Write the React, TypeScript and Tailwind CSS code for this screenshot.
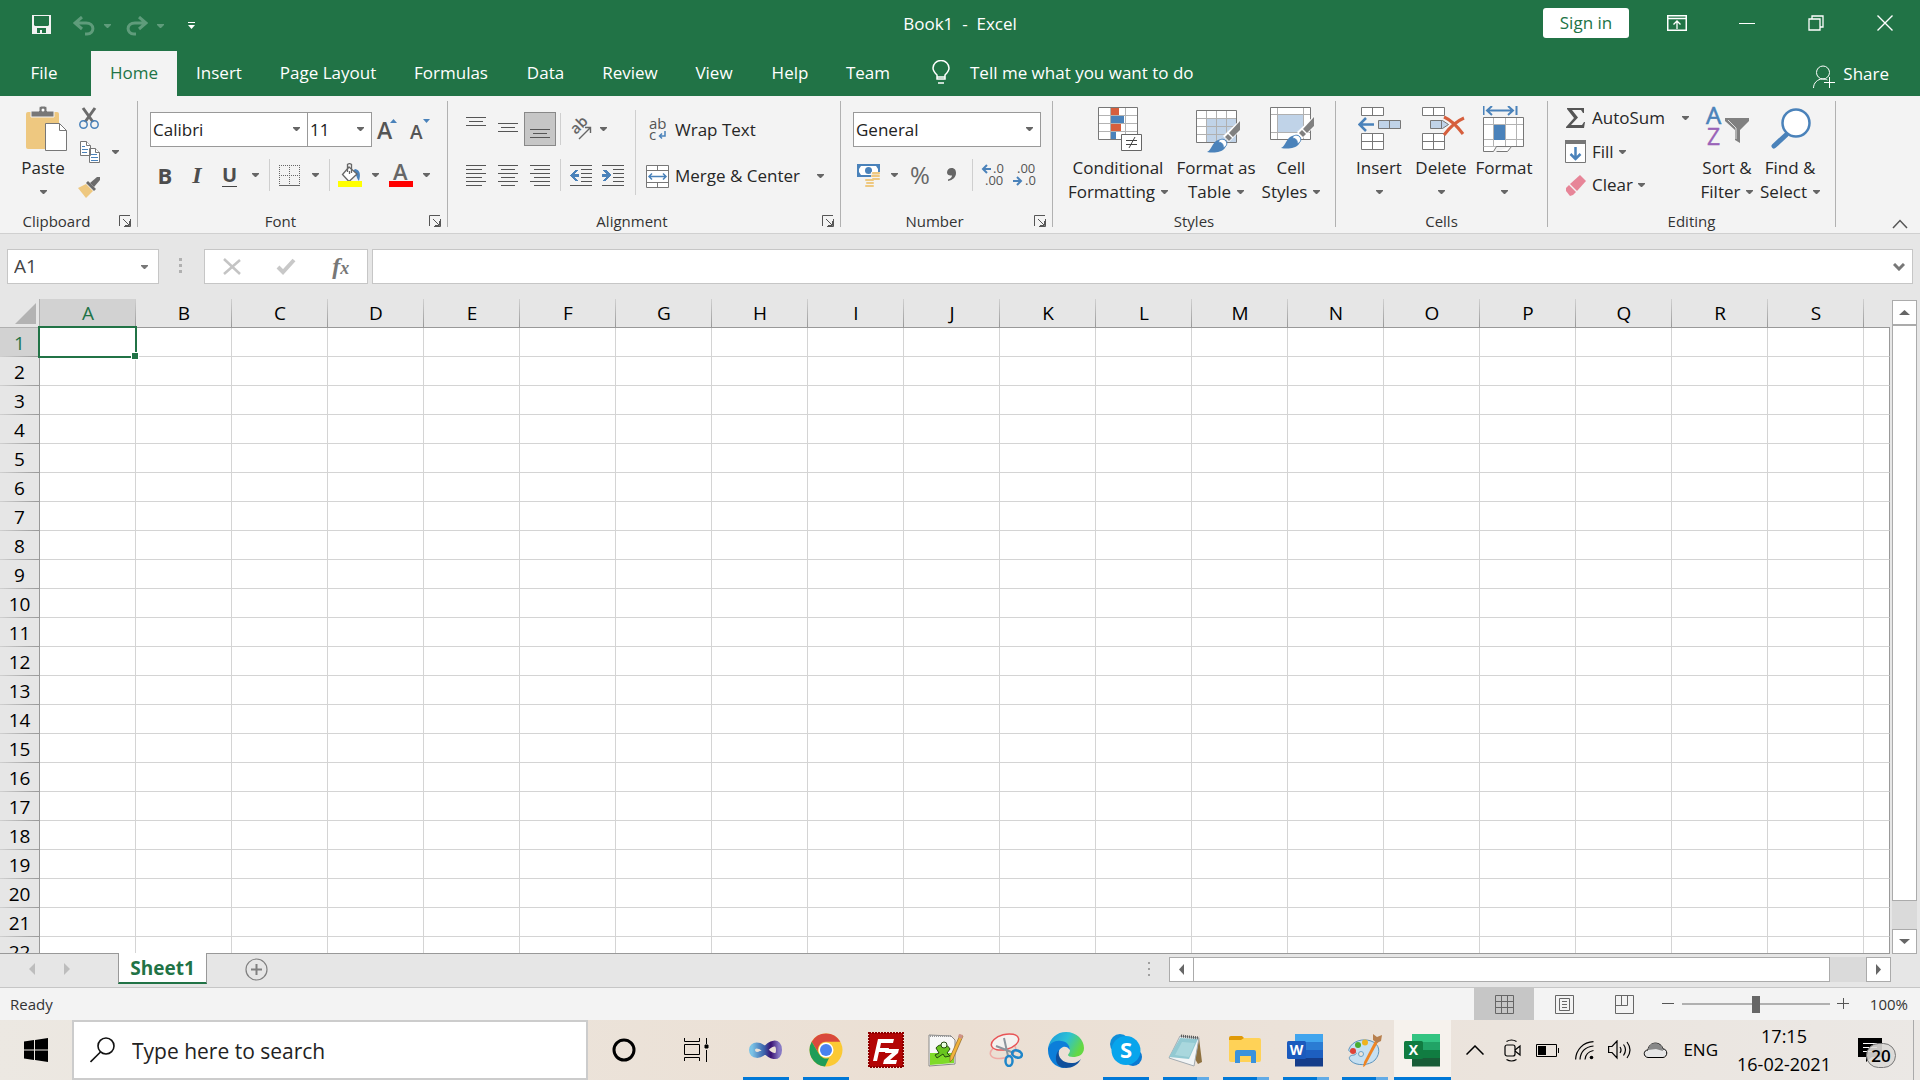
import { useState } from 'react';
import type { ReactNode } from 'react';
import clsx from 'clsx';

const COLUMNS = 'ABCDEFGHIJKLMNOPQRS'.split('');
const ROWS = Array.from({ length: 22 }, (_, i) => i + 1);

const TABS = [
  { name: 'Home', width: 'w-[86px]' },
  { name: 'Insert', width: 'w-[84px]' },
  { name: 'Page Layout', width: 'w-[134px]' },
  { name: 'Formulas', width: 'w-[112px]' },
  { name: 'Data', width: 'w-[77px]' },
  { name: 'Review', width: 'w-[92px]' },
  { name: 'View', width: 'w-[76px]' },
  { name: 'Help', width: 'w-[76px]' },
  { name: 'Team', width: 'w-[80px]' },
];

function Caret({ className = 'text-[#666]' }: { className?: string }) {
  return (
    <svg className={clsx('shrink-0', className)} width="7" height="4" viewBox="0 0 7 4" fill="currentColor">
      <path d="M0 0h7v1L4 4H3L0 1z" />
    </svg>
  );
}

function Separator() {
  return <div className="mx-1 h-8 w-px shrink-0 bg-[#cfcfcf]" />;
}

function Tool({ label, className, children }: { label: string; className: string; children: ReactNode }) {
  return (
    <button aria-label={label} className={clsx('flex h-8 shrink-0 items-center justify-center', className)}>
      {children}
    </button>
  );
}

function Group({ label, width, launcher = false, children }: { label: string; width: string; launcher?: boolean; children: ReactNode }) {
  return (
    <section className={clsx('flex shrink-0', width)} aria-label={label}>
      <div className="flex min-w-0 flex-1 flex-col">
        <div className="h-[113px]">{children}</div>
        <div className="flex h-6 items-center">
          <span className="flex-1 text-center text-[15px] leading-6 text-[#333]">{label}</span>
          {launcher && (
            <button aria-label={`${label} settings`} className="flex w-6 justify-center">
              <svg width="12" height="12" fill="none" stroke="#555">
                <path d="M.5 11V.5H11M11.5 4v7.5H5M4 4l6 6M10.500 6v4.500H6" />
              </svg>
            </button>
          )}
        </div>
      </div>
      <div className="mt-[5px] h-[126px] w-px bg-[#b1b1b1]" />
    </section>
  );
}

function BigButton({ icon, lines, caretBelow = false, width }: { icon: ReactNode; lines: string[]; caretBelow?: boolean; width: string }) {
  return (
    <button className={clsx('flex shrink-0 flex-col items-center text-[17px] leading-6 whitespace-nowrap text-[#262626]', width)}>
      <span className="flex h-[52px] items-start justify-center">{icon}</span>
      <span>{lines[0]}</span>
      {caretBelow ? (
        <span className="flex h-6 items-center">
          <Caret />
        </span>
      ) : (
        <span className="flex items-center gap-[6px]">
          {lines[1]}
          <Caret />
        </span>
      )}
    </button>
  );
}

function Combo({ label, value, options, width }: { label: string; value: string; options: string[]; width: string }) {
  return (
    <div className={clsx('relative h-[35px] shrink-0', width)}>
      <select
        aria-label={label}
        defaultValue={value}
        className="h-full w-full appearance-none border border-[#999] bg-white pl-[2px] text-[17px] text-[#222] outline-none"
      >
        {options.map((o) => (
          <option key={o}>{o}</option>
        ))}
      </select>
      <span className="pointer-events-none absolute top-[15px] right-2 flex">
        <Caret />
      </span>
    </div>
  );
}

/* rows of [y, x1, x2] drawn as one pixel rules */
function Lines({ rows, width, height, children }: { rows: number[][]; width: number; height: number; children?: ReactNode }) {
  return (
    <svg width={width} height={height} shapeRendering="crispEdges">
      {rows.map(([y, a, b]) => (
        <rect key={y} x={a} y={y} width={b - a} height="1" fill="#555" />
      ))}
      {children}
    </svg>
  );
}

function Brush() {
  return (
    <g>
      <path d="M44 11v11L33 33l-6-6z" fill="#fff" />
      <path d="M44 12v9l-7 7-4-4z" fill="#808080" />
      <path d="M32 25l4 4-3 3-4-4z" fill="#808080" />
      <path d="M11 43c5-2 5-10 11-12 6-1 10 4 7 8-4 5-12 5-18 4z" fill="#4a82ba" />
      <path d="M22 33c1-3 6-4 8-1s0 6-3 7c1-3-1-6-5-6z" fill="#fff" stroke="#4a82ba" />
    </g>
  );
}

function ClipboardGroup() {
  return (
    <Group label="Clipboard" width="w-[138px]" launcher>
      <div className="flex pt-2">
        <div className="pl-[12px]">
          <BigButton
            width="w-[62px]"
            lines={['Paste']}
            caretBelow
            icon={
              <svg className="mt-[2px] ml-2" width="42" height="46">
                <rect x="0" y="6" width="33" height="37" rx="2" fill="#eec880" />
                <path d="M5 11V5h8V1l2-1h4l2 1v4h7v6z" fill="#777" stroke="#f3f3f3" />
                <circle cx="17" cy="4" r="1.500" fill="#fff" />
                <path d="M19.500 17.500h14l7 7v20h-21z" fill="#fff" stroke="#777" />
                <path d="M33.500 17.500v7h7" fill="none" stroke="#777" />
              </svg>
            }
          />
        </div>
        <div className="flex flex-col pl-[2px]">
          <button aria-label="Cut" className="flex h-[27px] w-[26px] items-center justify-center">
            <svg width="20" height="22" fill="none">
              <path d="M4 1l10 14M16 1L6 15" stroke="#6b6b6b" strokeWidth="3" />
              <circle cx="4.500" cy="17.500" r="3.700" stroke="#4a82ba" strokeWidth="1.500" />
              <circle cx="15.500" cy="17.500" r="3.700" stroke="#4a82ba" strokeWidth="1.500" />
            </svg>
          </button>
          <div className="flex h-[42px] items-center">
            <button aria-label="Copy" className="flex w-[28px] items-center justify-center">
              <svg width="21" height="23" fill="#fff" stroke="#777">
                <path d="M.5.5h6l4 4v10H.5zM9.500 7.500h6l4 4v10h-10z" />
                <path d="M6.500.5v4h4M15.500 7.500v4h4" />
                <path d="M2 5.500h3M2 8.500h6M2 11.500h5M11 13.500h6M11 16.500h7M11 19.500h7" stroke="#4a82ba" />
              </svg>
            </button>
            <button aria-label="Copy options" className="ml-px flex w-[20px] justify-center">
              <Caret />
            </button>
          </div>
          <button aria-label="Format Painter" className="flex h-[28px] w-[26px] items-center justify-center">
            <svg width="24" height="21">
              <path d="M1 11l8-4 7 7-7 7z" fill="#eec880" />
              <path d="M9 6l2-2 8 8-2 2z" fill="#6b6b6b" />
              <path d="M13 6l7-6h3v3l-6 7z" fill="#6b6b6b" />
            </svg>
          </button>
        </div>
      </div>
    </Group>
  );
}

function FontGroup() {
  return (
    <Group label="Font" width="w-[310px]" launcher>
      <div className="flex flex-col gap-3 pt-4 pl-3">
        <div className="flex items-center">
          <Combo label="Font name" value="Calibri" options={['Calibri', 'Arial', 'Cambria']} width="w-[158px]" />
          <Combo label="Font size" value="11" options={['10', '11', '12', '14']} width="-ml-px w-[65px]" />
          <Tool label="Increase font size" className="w-8">
            <svg className="overflow-visible" width="22" height="24">
              <text x="0" y="21" fontSize="23" fontWeight="600" fill="#555">A</text>
              <path d="M13 5l3.500-4L20 5z" fill="#4a82ba" />
            </svg>
          </Tool>
          <Tool label="Decrease font size" className="w-8">
            <svg className="overflow-visible" width="22" height="24">
              <text x="1" y="21" fontSize="19" fontWeight="600" fill="#555">A</text>
              <path d="M14 1h7l-3.500 4z" fill="#4a82ba" />
            </svg>
          </Tool>
        </div>
        <div className="flex items-center text-[22px] leading-8 text-[#4d4d4d]">
          <Tool label="Bold" className="w-[30px] font-bold">B</Tool>
          <Tool label="Italic" className="w-[34px] font-['Liberation_Serif',serif] text-2xl font-bold italic">I</Tool>
          <Tool label="Underline" className="w-[31px]">
            <span className="border-b border-[#444] text-xl leading-[22px] font-bold">U</span>
          </Tool>
          <Tool label="Underline options" className="w-5"><Caret /></Tool>
          <Separator />
          <Tool label="Borders" className="w-[31px]">
            <svg width="21" height="21" fill="none" stroke="#666" shapeRendering="crispEdges">
              <path d="M0 .5h21M0 10.500h21M.5 0v20M10.500 0v20M20.500 0v20" strokeDasharray="1 1" />
              <path d="M0 20.500h21" />
            </svg>
          </Tool>
          <Tool label="Border options" className="w-5"><Caret /></Tool>
          <Separator />
          <Tool label="Fill color" className="w-[31px]">
            <svg width="24" height="24" fill="none">
              <path d="M17 6c5 1 6 5 4 12-3-3-2-7-6-10z" fill="#4a82ba" />
              <path d="M11 4l8 7-8 7.500-6.500-7z" fill="#fff" stroke="#666" strokeWidth="1.300" />
              <path d="M9.500 9V1.500l2-1 2 1V10M11.500 8v3" stroke="#666" strokeWidth="1.300" />
              <path d="M0 18h24v6H0z" fill="#ff0" />
            </svg>
          </Tool>
          <Tool label="Fill color options" className="w-5"><Caret /></Tool>
          <Tool label="Font color" className="w-[31px]">
            <svg className="overflow-visible" width="24" height="24">
              <text x="4" y="17" fontSize="22" fontWeight="600" fill="#666">A</text>
              <path d="M0 18h24v6H0z" fill="red" />
            </svg>
          </Tool>
          <Tool label="Font color options" className="w-5"><Caret /></Tool>
        </div>
      </div>
    </Group>
  );
}

const LEFT = [[0, 0, 20], [4, 0, 16], [8, 0, 20], [12, 0, 16], [16, 0, 20], [20, 0, 16]];
const CENTER = [[0, 0, 20], [4, 3, 17], [8, 0, 20], [12, 3, 17], [16, 0, 20], [20, 3, 17]];
const RIGHT = [[0, 0, 20], [4, 4, 20], [8, 0, 20], [12, 4, 20], [16, 0, 20], [20, 4, 20]];
const INDENT = [[0, 0, 22], [4, 11, 22], [8, 11, 22], [12, 11, 22], [16, 11, 22], [20, 0, 22]];

function AlignmentGroup() {
  return (
    <Group label="Alignment" width="w-[393px]" launcher>
      <div className="flex pt-[14px] pl-3">
        <div className="flex w-[175px] shrink-0 flex-col gap-[11px]">
          <div className="flex h-[38px] items-center">
            <Tool label="Top align" className="w-8">
              <Lines width={20} height={24} rows={[[0, 0, 20], [4, 3, 17], [8, 0, 20]]} />
            </Tool>
            <Tool label="Middle align" className="w-8">
              <Lines width={20} height={24} rows={[[6, 0, 20], [10, 3, 17], [14, 0, 20]]} />
            </Tool>
            <button aria-label="Bottom align" className="flex h-[34px] w-8 items-center justify-center border border-[#888] bg-[#c6c6c6]">
              <Lines width={20} height={24} rows={[[12, 0, 20], [16, 3, 17], [20, 0, 20]]} />
            </button>
            <Separator />
            <Tool label="Orientation" className="w-8">
              <svg className="overflow-visible" width="22" height="22">
                <text x="6" y="17" fontSize="15" fontWeight="600" fill="#666" transform="rotate(-45 6 17)">ab</text>
                <path d="M9 21L20 10M15 9.500h5.500V15" fill="none" stroke="#666" strokeWidth="1.400" />
              </svg>
            </Tool>
            <Tool label="Orientation options" className="w-3"><Caret /></Tool>
          </div>
          <div className="flex items-center">
            <Tool label="Align left" className="w-8"><Lines width={20} height={21} rows={LEFT} /></Tool>
            <Tool label="Center" className="w-8"><Lines width={20} height={21} rows={CENTER} /></Tool>
            <Tool label="Align right" className="w-8"><Lines width={20} height={21} rows={RIGHT} /></Tool>
            <Separator />
            <Tool label="Decrease indent" className="w-8">
              <Lines width={22} height={21} rows={INDENT}>
                <path d="M0 10l5-5h3L5 9h4v3H5l3 4H5z" fill="#4a82ba" />
              </Lines>
            </Tool>
            <Tool label="Increase indent" className="w-8">
              <Lines width={22} height={21} rows={INDENT}>
                <path d="M9 10L4 5H1l3 4H0v3h4l-3 4h3z" fill="#4a82ba" />
              </Lines>
            </Tool>
          </div>
        </div>
        <div className="h-[85px] w-px shrink-0 bg-[#cfcfcf]" />
        <div className="flex flex-1 flex-col gap-[14px] pt-1 pl-[10px] text-[17px] whitespace-nowrap text-[#262626]">
          <button className="flex h-8 items-center">
            <span className="flex w-[29px] pl-[3px]">
              <svg className="overflow-visible" width="20" height="24" fill="#555" fontSize="15">
                <text x="0" y="11">ab</text>
                <text x="0" y="22">c</text>
                <path d="M16 13v5h-5M13 15.500L10.500 18l2.500 2.500" fill="none" stroke="#4a82ba" strokeWidth="1.500" />
              </svg>
            </span>
            Wrap Text
          </button>
          <div className="flex h-8 items-center">
            <button className="flex items-center">
              <span className="flex w-[29px]">
                <svg width="23" height="23" fill="#fff" stroke="#777">
                  <path d="M.5.5h22v22H.5zM.5 5.500h22M.5 17.500h22M11.500.5v5M11.500 17.500v5" />
                  <path d="M3 11.500h17M6 8.500l-3 3 3 3M17 8.500l3 3-3 3" fill="none" stroke="#4a82ba" strokeWidth="1.500" />
                </svg>
              </span>
              Merge & Center
            </button>
            <button aria-label="Merge options" className="flex flex-1 items-center justify-center">
              <Caret />
            </button>
          </div>
        </div>
      </div>
    </Group>
  );
}

function NumberGroup() {
  return (
    <Group label="Number" width="w-[212px]" launcher>
      <div className="flex flex-col gap-3 pt-4 pl-3">
        <Combo label="Number format" value="General" options={['General', 'Number', 'Currency', 'Percentage']} width="w-[188px]" />
        <div className="flex items-center text-[#666]">
          <Tool label="Accounting format" className="w-[31px]">
            <svg width="24" height="23">
              <path d="M0 0h23v13H0z" fill="#4a82ba" />
              <path d="M4 2h15l2 3v3l-2 3H4L2 8V5z" fill="#fff" />
              <circle cx="11.500" cy="6.500" r="3.500" fill="#4a82ba" />
              <path d="M14 8h9v10h-9zM8 15h10v8H8z" fill="#f3f3f3" />
              <g fill="#eec880">
                <rect x="15" y="8" width="8" height="2.500" rx="1" />
                <rect x="14" y="11" width="9" height="2" rx="1" />
                <rect x="15" y="14" width="8" height="2" rx="1" />
                <rect x="8" y="15" width="9" height="2" rx="1" />
                <rect x="9" y="18" width="8" height="2" rx="1" />
                <rect x="8" y="21" width="9" height="2" rx="1" />
              </g>
            </svg>
          </Tool>
          <Tool label="Accounting options" className="w-5"><Caret /></Tool>
          <Tool label="Percent style" className="w-8 text-2xl">%</Tool>
          <Tool label="Comma style" className="w-8">
            <svg width="10" height="14" fill="#666">
              <path d="M4.500 0C8 0 9 2.500 9 5c0 4-3 7-8 8v-1.500c3-1 4-2.500 4-4C2 8 0 6.500 0 4.500 0 2 2 0 4.500 0z" />
            </svg>
          </Tool>
          <Separator />
          <Tool label="Increase decimal" className="w-8">
            <svg className="overflow-visible" width="24" height="24" fill="#555" fontSize="13">
              <text x="12" y="10">.0</text>
              <text x="4" y="22">.00</text>
              <path d="M10 6H2M6 2L2 6l4 4" fill="none" stroke="#4a82ba" strokeWidth="2" />
            </svg>
          </Tool>
          <Tool label="Decrease decimal" className="w-8">
            <svg className="overflow-visible" width="24" height="24" fill="#555" fontSize="13">
              <text x="4" y="10">.00</text>
              <text x="12" y="22">.0</text>
              <path d="M0 18h8M4 14l4 4-4 4" fill="none" stroke="#4a82ba" strokeWidth="2" />
            </svg>
          </Tool>
        </div>
      </div>
    </Group>
  );
}

function StylesGroup() {
  return (
    <Group label="Styles" width="w-[283px]">
      <div className="flex pt-2 pl-[11px]">
        <BigButton
          width="w-[108px]"
          lines={['Conditional', 'Formatting']}
          icon={
            <svg className="mt-[3px] ml-1" width="44" height="44">
              <path d="M.5.5h39v32H.5z" fill="#fff" stroke="#777" />
              <path d="M12.500 1v31M27.500 1v31M1 8.500h38M1 16.500h38M1 24.500h38" stroke="#b3b3b3" fill="none" />
              <path d="M13 1h8v7h-8zM13 17h10v7H13z" fill="#d65f3d" />
              <path d="M13 9h13v7H13zM13 25h5v7h-5z" fill="#4a82ba" />
              <path d="M23.500 27.500h20v16h-20z" fill="#fff" stroke="#666" />
              <path d="M28 33.500h11M28 37.500h11M37 30l-6 11" stroke="#444" fill="none" />
            </svg>
          }
        />
        <BigButton
          width="w-[88px]"
          lines={['Format as', 'Table']}
          icon={
            <svg className="mt-[6px] ml-1" width="44" height="44">
              <path d="M.5.5h40v32H.5z" fill="#fff" />
              <path d="M11 9h29v23H11z" fill="#c0d3e8" />
              <path d="M10.500 1v31M20.500 1v31M30.500 1v31M1 8.500h39M1 16.500h39M1 24.500h39" stroke="#b0b0b0" fill="none" />
              <path d="M.5.5h40v32H.5z" fill="none" stroke="#777" />
              <g transform="translate(0 -1)"><Brush /></g>
            </svg>
          }
        />
        <BigButton
          width="w-[62px]"
          lines={['Cell', 'Styles']}
          icon={
            <svg className="mt-[3px] ml-[2px]" width="44" height="44">
              <path d="M.5.5h40v32H.5z" fill="#fff" />
              <path d="M8 8h25v17H8z" fill="#c0d3e8" />
              <path d="M7.500 1v31M33.500 1v31M1 7.500h39M1 25.500h39" stroke="#b0b0b0" fill="none" />
              <path d="M.5.5h40v32H.5z" fill="none" stroke="#777" />
              <g transform="translate(0 -2)"><Brush /></g>
            </svg>
          }
        />
      </div>
    </Group>
  );
}

function CellsGroup() {
  return (
    <Group label="Cells" width="w-[212px]">
      <div className="flex pt-2 pl-3">
        <BigButton
          width="w-[62px]"
          lines={['Insert']}
          caretBelow
          icon={
            <svg className="mt-[3px]" width="43" height="44" fill="#fff" stroke="#777">
              <path d="M3.500.5h22v8h-22zM14.500.5v8M3.500 26.500h22v16h-22zM14.500 26.500v16M3.500 34.500h22" />
              <path d="M20.500 13.500h22v8h-22zM31.500 13.500v8" fill="#c0d3e8" />
              <path d="M16 17.500H2M8 11l-6.500 6.500L8 24" fill="none" stroke="#4a82ba" strokeWidth="2.500" />
            </svg>
          }
        />
        <BigButton
          width="w-[62px]"
          lines={['Delete']}
          caretBelow
          icon={
            <svg className="mt-[3px] ml-1" width="43" height="44" fill="#fff" stroke="#777">
              <path d="M.5.5h22v8H.5zM11.500.5v8M.5 26.500h22v16H.5zM11.500 26.500v16M.5 34.500h22" />
              <path d="M8.500 13.500h12l6 4-6 4h-12zM19.500 13.500v8" fill="#c0d3e8" />
              <path d="M22 10c7 3 13 9 19 17M42 11c-7 3-14 9-20 17" fill="none" stroke="#d65f3d" strokeWidth="3" />
            </svg>
          }
        />
        <BigButton
          width="w-[64px]"
          lines={['Format']}
          caretBelow
          icon={
            <svg className="mt-[2px]" width="42" height="46" fill="#fff" stroke="#777">
              <path d="M.5 11.500h40v29H.5z" />
              <path d="M10.500 12v28M22.500 12v28M33.500 12v28M1 18.500h39M1 33.500h39" stroke="#b3b3b3" />
              <path d="M11 19h11v15H11z" fill="#4a82ba" stroke="none" />
              <path d="M.5 40.500v5h10l3-5M13.500 45.500h11l4-5" />
              <path d="M.5 0v9M33.500 0v9M4 4.500h26M9 0L4 4.500 9 9M25 0l5 4.500L25 9" fill="none" stroke="#4a82ba" strokeWidth="2" />
            </svg>
          }
        />
      </div>
    </Group>
  );
}

function EditingGroup() {
  return (
    <Group label="Editing" width="w-[288px]">
      <div className="flex pl-[14px]">
        <div className="flex w-[134px] flex-col pt-[5px] text-[17px] text-[#262626]">
          <div className="flex h-[34px] items-center">
            <button className="flex items-center">
              <span className="flex w-[30px] pl-1">
                <svg width="20" height="20" fill="#555">
                  <path d="M1 0h17v5h-1l-2-3H6l6 7.500L5 17h11l2-3h1l-1 6H0v-1l8-9L1 1z" />
                </svg>
              </span>
              AutoSum
            </button>
            <button aria-label="AutoSum options" className="ml-auto flex w-[22px] justify-center">
              <Caret />
            </button>
          </div>
          <button className="flex h-[33px] items-center">
            <span className="flex w-[30px] pl-[3px]">
              <svg width="21" height="23">
                <path d="M.5.5h20v22H.5z" fill="#fff" stroke="#777" />
                <path d="M0 0h21v4H0z" fill="#777" />
                <path d="M10.500 7v12M5.500 14l5 5 5-5" fill="none" stroke="#4a82ba" strokeWidth="2.500" />
              </svg>
            </span>
            Fill
            <span className="ml-[5px]"><Caret /></span>
          </button>
          <button className="flex h-[34px] items-center">
            <span className="flex w-[30px] pl-1">
              <svg width="20" height="21" fill="#e78598">
                <path d="M14 0l6 6-9 10-7-7z" />
                <path d="M3 10l7 7-3 3-3 1-4-5v-3z" />
              </svg>
            </span>
            Clear
            <span className="ml-[5px]"><Caret /></span>
          </button>
        </div>
        <div className="flex pt-2">
          <BigButton
            width="w-[62px]"
            lines={['Sort &', 'Filter']}
            icon={
              <svg className="mt-[2px] overflow-visible" width="43" height="42">
                <text x="0" y="18" fontSize="24" fill="#4a82ba" stroke="#4a82ba" strokeWidth=".6">A</text>
                <text x="1" y="39" fontSize="23" fill="#9a63b8" stroke="#9a63b8" strokeWidth=".4">Z</text>
                <path d="M19 12h24v3l-9 9v13l-5-3V24l-10-9z" fill="#808080" />
                <path d="M22 14l8 8v11" stroke="#ddd" fill="none" />
              </svg>
            }
          />
          <BigButton
            width="w-[64px]"
            lines={['Find &', 'Select']}
            icon={
              <svg className="mt-1 ml-[2px]" width="41" height="41" fill="none" stroke="#4a82ba">
                <path d="M15 27L3 38" strokeWidth="5" strokeLinecap="round" />
                <circle cx="25" cy="15" r="13.500" fill="#fff" strokeWidth="2.500" />
              </svg>
            }
          />
        </div>
      </div>
    </Group>
  );
}

function TitleBar() {
  return (
    <div className="grid h-[51px] grid-cols-[1fr_auto_1fr] text-white">
      <div className="flex h-[39px] items-center pl-8">
        <button aria-label="Save" className="mt-[10px]">
          <svg width="19" height="19">
            <path d="M0 0h19v19H0z" fill="#f2f2f2" />
            <path d="M2 1h15v9l-1 1H3l-1-1zM5 13h9v5h-4v-3H8v3H5z" fill="#217346" />
          </svg>
        </button>
        {['Undo', 'Redo'].map((name) => (
          <div key={name} className={clsx('mt-3 flex items-center text-[#5f9c7b]', name === 'Undo' ? 'ml-[22px]' : 'ml-[15px]')}>
            <button aria-label={name} disabled>
              <svg width="22" height="20" fill="none" stroke="currentColor" strokeWidth="3" className={clsx(name === 'Redo' && '-scale-x-100')}>
                <path d="M9 1L2 7l7 6M2 7h11c9 0 9 11 1 11h-2" />
              </svg>
            </button>
            <button aria-label={`${name} options`} className="ml-[9px]" disabled>
              <Caret className="text-[#5f9c7b]" />
            </button>
          </div>
        ))}
        <button aria-label="Customize toolbar" className="mt-3 ml-6">
          <svg width="7" height="7" fill="#fff"><path d="M0 0h7v1H0zM0 3h7L3.500 7z" /></svg>
        </button>
      </div>
      <h1 className="mt-3 text-[17px] leading-6 whitespace-pre">Book1  -  Excel</h1>
      <div className="flex h-[46px] items-center justify-end">
        <button className="mr-6 h-[30px] w-[86px] rounded-[3px] bg-white text-[17px] leading-7 text-[#217346]">Sign in</button>
        <button aria-label="Ribbon display options" className="mr-[11px] flex w-12 justify-center">
          <svg width="20" height="16" fill="none" stroke="#fff">
            <path d="M.75.75h18.500v14.500H.75z" strokeWidth="1.500" />
            <path d="M1 3.500h18M10 14V6.500M6.500 9.500L10 6l3.500 3.500" strokeWidth="1.300" />
          </svg>
        </button>
        <button aria-label="Minimize" className="flex w-[69px] justify-center">
          <svg width="16" height="16" stroke="#fff"><path d="M0 8.500h16" /></svg>
        </button>
        <button aria-label="Restore" className="flex w-[69px] justify-center">
          <svg width="16" height="16" fill="none" stroke="#fff" strokeWidth="1.300"><path d="M1 4h11v11H1zM4 4V1h11v11h-3" /></svg>
        </button>
        <button aria-label="Close" className="flex w-[70px] justify-center">
          <svg width="16" height="16" stroke="#fff" strokeWidth="1.400"><path d="M.5.5l15 15M15.500.5l-15 15" /></svg>
        </button>
      </div>
    </div>
  );
}

function TabBar({ active, onSelect }: { active: string; onSelect: (name: string) => void }) {
  return (
    <nav className="flex h-[45px] text-[17px] leading-[43px] text-white">
      <button className="mr-[3px] w-[88px] pb-[2px]">File</button>
      {TABS.map((t) => (
        <button
          key={t.name}
          onClick={() => onSelect(t.name)}
          className={clsx('shrink-0 pb-[2px]', t.width, active === t.name && 'bg-[#f3f3f3] text-[#217346]')}
        >
          {t.name}
        </button>
      ))}
      <button className="ml-6 flex items-center gap-5 pb-[2px]">
        <svg width="18" height="25" fill="none" stroke="#fff" strokeWidth="1.500">
          <path d="M5 19v-4c-2-2-4-4-4-7a8 7.500 0 0 1 16 0c0 3-2 5-4 7v4zM5 17h8M6 23h6" />
        </svg>
        Tell me what you want to do
      </button>
      <button className="mr-[31px] ml-auto flex items-center gap-2">
        <svg className="mt-[6px]" width="22" height="24" fill="none" stroke="#fff">
          <circle cx="10" cy="7.500" r="6.500" />
          <path d="M.5 23c0-5 4-9 9-9 2 0 4 .5 5 1M16.500 12v11M11 17.500h11" />
        </svg>
        Share
      </button>
    </nav>
  );
}

function FormulaBar() {
  return (
    <div className="flex h-[65px] items-start bg-[#e6e6e6] pt-[15px] pr-[7px] pl-[7px]">
      <div className="flex h-[35px] w-[152px] items-center border border-[#c6c6c6] bg-white">
        <input aria-label="Name box" defaultValue="A1" className="w-0 flex-1 pl-[6px] text-[19px] text-[#444] outline-none" />
        <button aria-label="Named ranges" className="w-[27px]"><Caret className="ml-[10px] text-[#777]" /></button>
      </div>
      <svg className="mr-[21px] ml-[19px] mt-2 shrink-0" width="5" height="18" fill="#b0b0b0">
        <path d="M1 1h3v3H1zM1 7h3v3H1zM1 13h3v3H1z" />
      </svg>
      <div className="flex h-[35px] w-[164px] items-center justify-around border border-[#c6c6c6] bg-white">
        <button aria-label="Cancel">
          <svg width="18" height="18" stroke="#c4c4c4" strokeWidth="2.500"><path d="M1 1l16 15M17 2L1 16" /></svg>
        </button>
        <button aria-label="Enter">
          <svg width="20" height="18" fill="none" stroke="#c8c8c8" strokeWidth="4"><path d="M2 9l5 5L18 2" /></svg>
        </button>
        <button aria-label="Insert function" className="font-['Liberation_Serif',serif] text-[24px] leading-7 font-bold text-[#777] italic">
          f<span className="text-lg">x</span>
        </button>
      </div>
      <div className="ml-1 flex h-[35px] flex-1 items-center border border-[#c6c6c6] bg-white">
        <input aria-label="Formula" className="h-full flex-1 px-2 text-[17px] outline-none" />
        <button aria-label="Expand formula bar" className="mr-[7px]">
          <svg width="12" height="8" fill="none" stroke="#777" strokeWidth="3"><path d="M1 1l5 5 5-5" /></svg>
        </button>
      </div>
    </div>
  );
}

function ScrollButton({ label, points }: { label: string; points: string }) {
  return (
    <button aria-label={label} className="flex size-[25px] shrink-0 items-center justify-center border border-[#ababab] bg-white">
      <svg width="11" height="11" fill="#666"><polygon points={points} /></svg>
    </button>
  );
}

function Sheet() {
  return (
    <div className="flex min-h-0 flex-1 bg-[#e6e6e6]">
      <div className="min-w-0 flex-1 overflow-hidden border-b border-[#999]">
        <table className="w-full table-fixed border-separate border-spacing-0 text-[19px] text-black">
          <thead className="leading-[27px]">
            <tr>
              <th className="w-10 border-r border-b border-[#b0b0b0] p-0">
                <svg className="ml-[15px]" width="21" height="21" fill="#b3b3b3"><path d="M21 0v21H0z" /></svg>
              </th>
              {COLUMNS.map((c) => (
                <th
                  key={c}
                  className={clsx(
                    'w-24 border-b border-[#999] bg-[linear-gradient(#d0d0d0,#999)] bg-[length:1px_100%] bg-right bg-no-repeat p-0 pt-px font-normal',
                    c === 'A' && 'bg-[#d2d2d2] text-[#217346]',
                  )}
                >
                  {c}
                </th>
              ))}
              <th className="border-b border-[#999]" />
            </tr>
          </thead>
          <tbody className="leading-7">
            {ROWS.map((r) => (
              <tr key={r}>
                <th
                  className={clsx(
                    'border-r border-[#999] bg-[linear-gradient(to_right,#d0d0d0,#999)] bg-[length:100%_1px] bg-bottom bg-no-repeat p-0 pt-px font-normal',
                    r === 1 && 'bg-[#d2d2d2] text-[#217346]',
                  )}
                >
                  {r}
                </th>
                {COLUMNS.map((c) => (
                  <td key={c} className="relative border-r border-b border-[#d4d4d4] bg-white p-0">
                    {r === 1 && c === 'A' && (
                      <div className="absolute -top-[2px] -right-[2px] -bottom-[2px] -left-[2px] z-10 border-2 border-[#217346]">
                        <div className="absolute -right-[4px] -bottom-[4px] size-2 border border-white bg-[#217346]" />
                      </div>
                    )}
                  </td>
                ))}
                <td className="border-r border-b border-r-[#999] border-b-[#d4d4d4] bg-white p-0" />
              </tr>
            ))}
          </tbody>
        </table>
      </div>
      <div className="flex w-[30px] flex-col items-center pt-px pr-px">
        <ScrollButton label="Scroll up" points="0,8 5.500,3 11,8" />
        <div className="flex w-[25px] flex-1 flex-col bg-[#dadada]">
          <div className="h-[95.400%] border border-[#ababab] bg-white" />
        </div>
        <ScrollButton label="Scroll down" points="0,3 11,3 5.500,8" />
      </div>
    </div>
  );
}

function SheetTabs() {
  return (
    <div className="flex h-[34px] border-b border-[#c6c6c6] bg-[#e6e6e6]">
      <button aria-label="Previous sheet" className="ml-[22px] flex w-5 items-center justify-center pb-1">
        <svg width="6" height="12" fill="#bdbdbd"><path d="M6 0v12L0 6z" /></svg>
      </button>
      <button aria-label="Next sheet" className="ml-[15px] flex w-5 items-center justify-center pb-1">
        <svg width="6" height="12" fill="#bdbdbd"><path d="M0 0v12l6-6z" /></svg>
      </button>
      <button className="relative -mt-px ml-[41px] h-[31px] w-[89px] border-x border-b-2 border-x-[#999] border-b-[#217346] bg-white text-[19px] leading-7 font-bold text-[#217346]">
        Sheet1
      </button>
      <button aria-label="New sheet" className="ml-[38px] pb-[2px]">
        <svg width="23" height="23" fill="none" stroke="#808080">
          <circle cx="11.500" cy="11.500" r="10.500" strokeWidth="1.200" />
          <path d="M11.500 6v11M6 11.500h11" strokeWidth="2" />
        </svg>
      </button>
      <div className="mr-[29px] ml-auto flex w-[38.700%] pt-[3px]">
        <svg className="mt-1 mr-[18px] shrink-0" width="3" height="18" fill="#a0a0a0">
          <path d="M0 1h2v2H0zM0 7h2v2H0zM0 13h2v2H0z" />
        </svg>
        <ScrollButton label="Scroll left" points="8,0 8,11 3,5.500" />
        <div className="flex h-[25px] flex-1 bg-[#dadada]">
          <div className="w-[94.700%] border border-l-0 border-[#ababab] bg-white" />
        </div>
        <ScrollButton label="Scroll right" points="3,0 8,5.500 3,11" />
      </div>
    </div>
  );
}

function StatusBar() {
  return (
    <div className="flex h-8 items-center bg-[#f3f3f3] text-[15px] text-[#333]">
      <span className="pl-[10px]">Ready</span>
      <div className="ml-auto flex h-full">
        <button aria-label="Normal view" className="flex w-[60px] items-center justify-center bg-[#c6c6c6]">
          <svg width="19" height="19" fill="none" stroke="#666"><path d="M.5.5h18v18H.5zM6.500 0v19M12.500 0v19M0 6.500h19M0 12.500h19" /></svg>
        </button>
        <button aria-label="Page layout view" className="flex w-[60px] items-center justify-center">
          <svg width="19" height="19" fill="none" stroke="#666"><path d="M.5.5h18v18H.5zM4.500 3.500h10v12h-10zM7 6.500h5M7 9.500h5M7 12.500h5" /></svg>
        </button>
        <button aria-label="Page break view" className="flex w-[60px] items-center justify-center">
          <svg width="19" height="19" fill="none" stroke="#666"><path d="M.5.5h18v18H.5zM6.500 0v10.500M12.500 0v10.500M0 10.500h12.500" /></svg>
        </button>
      </div>
      <button aria-label="Zoom out" className="ml-2">
        <svg width="12" height="12" stroke="#555"><path d="M0 5.500h12" /></svg>
      </button>
      <input
        type="range"
        aria-label="Zoom"
        defaultValue={50}
        className="mr-[7px] ml-2 h-[17px] w-[148px] appearance-none bg-[linear-gradient(#b0b0b0,#b0b0b0)] bg-[length:100%_2px] bg-center bg-no-repeat [&::-webkit-slider-thumb]:h-[17px] [&::-webkit-slider-thumb]:w-2 [&::-webkit-slider-thumb]:appearance-none [&::-webkit-slider-thumb]:bg-[#666]"
      />
      <button aria-label="Zoom in">
        <svg width="12" height="12" stroke="#555"><path d="M0 5.500h12M6.500 0v11" /></svg>
      </button>
      <span className="mr-3 w-[59px] text-right">100%</span>
    </div>
  );
}

function OfficeIcon({ letter, shades, tile }: { letter: string; shades: string[]; tile: string }) {
  return (
    <svg width="36" height="33">
      {shades.map((s, i) => (
        <rect key={s} x="8" y={i * 8} width="28" height="8.500" fill={s} />
      ))}
      <rect x="0" y="7" width="19" height="18" rx="1.500" fill={tile} />
      <text x="9.500" y="21" fontSize="14" fontWeight="700" fill="#fff" textAnchor="middle">{letter}</text>
    </svg>
  );
}

const APPS: { name: string; running?: 'one' | 'many'; icon: ReactNode }[] = [
  {
    name: 'Visual Studio',
    running: 'one',
    icon: (
      <svg width="36" height="22" fill="none">
        <defs>
          <linearGradient id="vs" x1="0" x2="1"><stop offset="0" stopColor="#7cc4e6" /><stop offset=".45" stopColor="#3b62ab" /><stop offset=".7" stopColor="#3a1273" /><stop offset="1" stopColor="#8779c4" /></linearGradient>
        </defs>
        <path d="M17 11C12 5 4 5 4 11s8 7 13 0 14-10 14 0-9 6-14 0z" stroke="url(#vs)" strokeWidth="6" />
      </svg>
    ),
  },
  {
    name: 'Chrome',
    running: 'one',
    icon: (
      <svg width="34" height="34" viewBox="0 0 34 34">
        <circle cx="17" cy="17" r="16.500" fill="#fbc934" />
        <path d="M2.700 8.800a16.500 16.500 0 0 1 28.600 0H17a8 8 0 0 0-7 12z" fill="#d9493c" />
        <path d="M2.700 8.800L10 21a8 8 0 0 0 10 4l-4 8.500A16.500 16.500 0 0 1 2.700 8.800z" fill="#1f9d58" />
        <circle cx="17" cy="17" r="7.500" fill="#fff" />
        <circle cx="17" cy="17" r="6" fill="#4a83ef" />
      </svg>
    ),
  },
  {
    name: 'FileZilla',
    icon: (
      <svg width="36" height="36" viewBox="0 0 36 36">
        <rect x="1" y="1" width="34" height="34" fill="#b30505" stroke="#8d0000" strokeWidth="2" strokeDasharray="2 1" />
        <path d="M10 7h16l-1 4H13l-1 5h9l-1 4h-9l-2 9H5z" fill="#fff" />
        <path d="M18 17h13l-1 4-8 7h7l-1 4H15l1-4 8-7h-7z" fill="#fff" />
      </svg>
    ),
  },
  {
    name: 'Notepad++',
    icon: (
      <svg width="36" height="34" viewBox="0 0 36 34">
        <path d="M1 2l22 1 4 4v24L1 33z" fill="#f8f8f8" stroke="#888" />
        <path d="M2 3h21" stroke="#999" strokeWidth="2" strokeDasharray="1 1" />
        <path d="M2 20h24v10L2 32z" fill="#7fda28" />
        <path d="M8 15c3-5 12-4 14 1l-3 4 3 3-5 1-2-3-6 4-2-3 4-2z" fill="#68c51e" stroke="#264b10" />
        <circle cx="16" cy="12" r="3" fill="#e9ffe0" stroke="#264b10" />
        <path d="M32 2l3 1-10 23-3 3v-5z" fill="#f2b33b" stroke="#8b6526" strokeWidth=".7" />
        <path d="M31 1l4 1-1 4-4-2z" fill="#ce9388" />
      </svg>
    ),
  },
  {
    name: 'Snip',
    icon: (
      <svg width="34" height="34" fill="none">
        <ellipse cx="14" cy="18" rx="13" ry="7" stroke="#efaaa5" strokeWidth="1.500" transform="rotate(-15 14 18)" />
        <ellipse cx="16" cy="9" rx="14" ry="7.500" fill="#f4f2ef" stroke="#e85456" strokeWidth="1.500" transform="rotate(-15 16 9)" />
        <path d="M15 5l4 18M7 13l18 7" stroke="#8c959d" strokeWidth="2" />
        <ellipse cx="20" cy="28" rx="3.500" ry="5" stroke="#1f86c9" strokeWidth="2.500" />
        <ellipse cx="28" cy="21" rx="5" ry="3.500" stroke="#1f86c9" strokeWidth="2.500" transform="rotate(20 28 21)" />
      </svg>
    ),
  },
  {
    name: 'Edge',
    icon: (
      <svg width="36" height="36" viewBox="0 0 36 36">
        <defs>
          <linearGradient id="edge" x1="0" x2="1" y2=".4"><stop offset="0" stopColor="#1b95dc" /><stop offset=".55" stopColor="#2cc1d5" /><stop offset="1" stopColor="#65d843" /></linearGradient>
        </defs>
        <path d="M0 16C2 6 9 0 18 0c11 0 18 8 18 16 0 7-6 9-11 9-3 0-5-1-5-2s2-2 2-5c0-5-5-8-10-8S2 12 0 16z" fill="url(#edge)" />
        <path d="M0 16c2-5 7-8 13-7 5 0 9 4 9 9-2-3-5-4-7-3-5 2-7 9-3 15l5 6C7 36 0 28 0 18z" fill="#0c7ed9" />
        <path d="M11 18c-2 8 5 14 14 13 3 0 6-2 8-4-3 6-9 9-15 9C8 36 5 25 11 18z" fill="#104f9b" />
      </svg>
    ),
  },
  {
    name: 'Skype',
    running: 'one',
    icon: (
      <svg width="32" height="33">
        <circle cx="10" cy="10" r="10" fill="#0f8ed8" />
        <circle cx="23" cy="23" r="9" fill="#0a7ad2" />
        <circle cx="16" cy="16.500" r="14.500" fill="#08a5ec" />
        <text x="16" y="24" fontSize="22" fontWeight="700" fill="#fff" textAnchor="middle">S</text>
      </svg>
    ),
  },
  {
    name: 'Notepad',
    running: 'many',
    icon: (
      <svg width="35" height="33" viewBox="0 0 35 33">
        <path d="M13 2l18 2 3 24-4 2z" fill="#8e7140" />
        <path d="M12 2l19 2-5 28L1 24z" fill="#f2f5f6" stroke="#a2aab0" />
        <path d="M12 4l18 1-9 20L1 23z" fill="#92c9d2" />
        <path d="M14 8l13 1-6 14-14-2z" fill="#b9e1e5" opacity=".6" />
        <path d="M13 2l18 2" stroke="#555" strokeWidth="3" strokeDasharray="1 1" />
      </svg>
    ),
  },
  {
    name: 'File Explorer',
    running: 'many',
    icon: (
      <svg width="33" height="28" viewBox="0 0 33 28">
        <path d="M0 2q0-2 2-2h11l3 3-3 3H0z" fill="#e09a08" />
        <path d="M0 4h12l3-2h15q2 0 2 2v20q0 2-2 2H2q-2 0-2-2z" fill="#ffd257" />
        <path d="M6 27V16q0-2 2-2h17q2 0 2 2v11h-5v-7H11v7z" fill="#3a92dc" />
      </svg>
    ),
  },
  { name: 'Word', running: 'many', icon: <OfficeIcon letter="W" tile="#1b5abd" shades={['#41a5ee', '#2b7cd3', '#1d5fc0', '#153d8a']} /> },
  {
    name: 'Paint',
    running: 'many',
    icon: (
      <svg width="36" height="34" viewBox="0 0 36 34">
        <path d="M3 16C6 8 17 5 25 8c9 3 10 12 4 19-6 6-19 6-24 1-4-4 0-6 3-6 4-1 2-4-2-3-2 0-4-1-3-3z" fill="#c6e0f2" stroke="#5b94bd" />
        <circle cx="7" cy="18" r="3" fill="#df4238" />
        <circle cx="12" cy="12" r="3" fill="#48ac31" />
        <circle cx="19" cy="9.500" r="3" fill="#efb31f" />
        <circle cx="15" cy="21" r="2.500" fill="#f0e5da" stroke="#6ca3c7" />
        <path d="M29 8l3 1-13 24-2 1 1-5z" fill="#ee8525" />
        <path d="M27 1l4 3 5-2-1 6-4 2-4-3z" fill="#b8804e" />
      </svg>
    ),
  },
  { name: 'Excel', icon: <OfficeIcon letter="X" tile="#107c41" shades={['#33c481', '#21a366', '#107c41', '#185c37']} /> },
];

function Taskbar() {
  return (
    <footer className="flex h-[60px] bg-linear-to-r from-[#ece8e2] via-[#ebdfd3] to-[#ebe8e5] text-black">
      <button aria-label="Start" className="flex w-[72px] items-center justify-center">
        <svg width="24" height="24"><path d="M0 3.500L10 2v9.500H0zM11 2l13-2v11.500H11zM0 12.500h10V22L0 20.500zM11 12.500h13V24l-13-2z" /></svg>
      </button>
      <label className="flex w-[516px] items-center border-2 border-[#ccc] bg-white pl-4">
        <svg width="25" height="26" fill="none" stroke="#111" strokeWidth="1.600">
          <circle cx="16" cy="9" r="8" />
          <path d="M10.500 15L.5 25" />
        </svg>
        <input aria-label="Search" placeholder="Type here to search" className="ml-[17px] flex-1 pt-1 text-[21px] outline-none placeholder:text-[#222]" />
      </label>
      <button aria-label="Cortana" className="flex w-[72px] items-center justify-center">
        <svg width="24" height="24" fill="none" stroke="#000" strokeWidth="3"><circle cx="12" cy="12" r="10" /></svg>
      </button>
      <button aria-label="Task view" className="flex w-[72px] items-center justify-center">
        <svg width="25" height="24" fill="none" stroke="#000"><path d="M.5 0v3.500h15V0M.5 6.500h15v10H.5zM.5 23v-3.500h15V23M22.500 0v6M22.500 12v12" /><path d="M21 7h3v3h-3z" fill="#000" /></svg>
      </button>
      <div className="ml-1 flex">
        {APPS.map((app) => (
          <button
            key={app.name}
            aria-label={app.name}
            className={clsx(
              'flex flex-col items-center',
              app.name === 'Excel' ? 'w-[57px] bg-[#f6f2ed]' : app.name === 'Word' || app.name === 'Paint' ? 'w-[59px]' : 'w-[60px]',
            )}
          >
            <span className="flex h-[57px] items-center pt-[3px] pr-px">{app.icon}</span>
            {app.name === 'Excel' && <span className="h-[3px] w-full bg-[#0078d7]" />}
            {app.running === 'one' && <span className="h-[3px] w-[46px] bg-[#0078d7]" />}
            {app.running === 'many' && <span className="h-[3px] w-[46px] border-r-12 border-[#62abe6] bg-[#0078d7]" />}
          </button>
        ))}
      </div>
      <div className="ml-auto flex items-center">
        <button aria-label="Hidden icons" className="mr-5">
          <svg width="18" height="10" fill="none" stroke="#000" strokeWidth="1.500"><path d="M.5 9.500L9 1l8.500 8.500" /></svg>
        </button>
        <svg className="mr-[15px]" width="17" height="23" fill="none" stroke="#000" strokeWidth="1.200">
          <path d="M2.500 2.500q5-3 10 0M2.500 20.500q5 3 10 0" />
          <rect x="1" y="6" width="10" height="11" rx="2" />
          <path d="M11 11l5-4v9l-5-4" />
        </svg>
        <svg className="mr-4" width="23" height="13" fill="none" stroke="#000">
          <path d="M.5.5h20v12H.5zM22.500 4v5" />
          <path d="M2 2h8v9H2z" fill="#000" stroke="none" />
        </svg>
        <svg className="mr-[14px]" width="19" height="19" fill="none" stroke="#000" strokeWidth="1.200">
          <path d="M.6 18.500C1 9 8 1 18.500.7M5 18.500C5.500 11 10 6 18.500 5M10 18.500c.5-5 3-8 8.500-9" />
          <circle cx="16.500" cy="16.500" r="1.800" fill="#000" stroke="none" />
        </svg>
        <svg className="mr-3" width="23" height="20" fill="none" stroke="#000" strokeWidth="1.200">
          <path d="M.6 6.500H4L9 1v17l-5-5.500H.6zM12 7q2 3 0 6M15.500 4.500q4 5 0 11M19 2q6 8 0 16" />
        </svg>
        <svg width="25" height="17" stroke="#000">
          <path d="M5 15.500C0 15 0 8 5 8c1-9 13-9 15-1 5 0 5 8 0 8.500z" fill="#e6e6e6" />
          <path d="M5 8l8-1 7 2c0-8-13-12-15-1z" fill="#888" stroke="none" />
        </svg>
        <span className="ml-[15px] text-[17px]">ENG</span>
        <div className="ml-[18px] w-24 text-center text-[18px] leading-7">
          <div>17:15</div>
          <div>16-02-2021</div>
        </div>
        <button aria-label="Notifications" className="relative ml-[26px] h-9 w-[55px]">
          <svg width="24" height="24">
            <path d="M0 0h24v19H14l-6 5v-5H0z" />
            <path d="M5 5.500h14M5 9.500h14M5 13.500h14" stroke="#fff" />
          </svg>
          <span className="absolute top-[11px] left-2 flex h-[25px] w-[30px] items-center justify-center rounded-full border border-[#777] bg-[#dcd9d6]/90 text-[17px] font-semibold">
            20
          </span>
        </button>
        <div className="mr-[6px] h-[60px] w-px bg-[#aaa]" />
      </div>
    </footer>
  );
}

export default function App() {
  const [tab, setTab] = useState('Home');

  return (
    <div className="flex h-screen flex-col overflow-hidden bg-[#e6e6e6] font-['Open_Sans',sans-serif]">
      <header className="bg-[#217346]">
        <TitleBar />
        <TabBar active={tab} onSelect={setTab} />
      </header>
      <div className="flex h-[138px] border-b border-[#d0d0d0] bg-[#f3f3f3]">
        <ClipboardGroup />
        <FontGroup />
        <AlignmentGroup />
        <NumberGroup />
        <StylesGroup />
        <CellsGroup />
        <EditingGroup />
        <button aria-label="Collapse ribbon" className="mr-[12px] mb-1 ml-auto self-end">
          <svg width="16" height="10" fill="none" stroke="#555" strokeWidth="1.500"><path d="M1 9l7-7.500L15 9" /></svg>
        </button>
      </div>
      <FormulaBar />
      <Sheet />
      <SheetTabs />
      <StatusBar />
      <Taskbar />
    </div>
  );
}
